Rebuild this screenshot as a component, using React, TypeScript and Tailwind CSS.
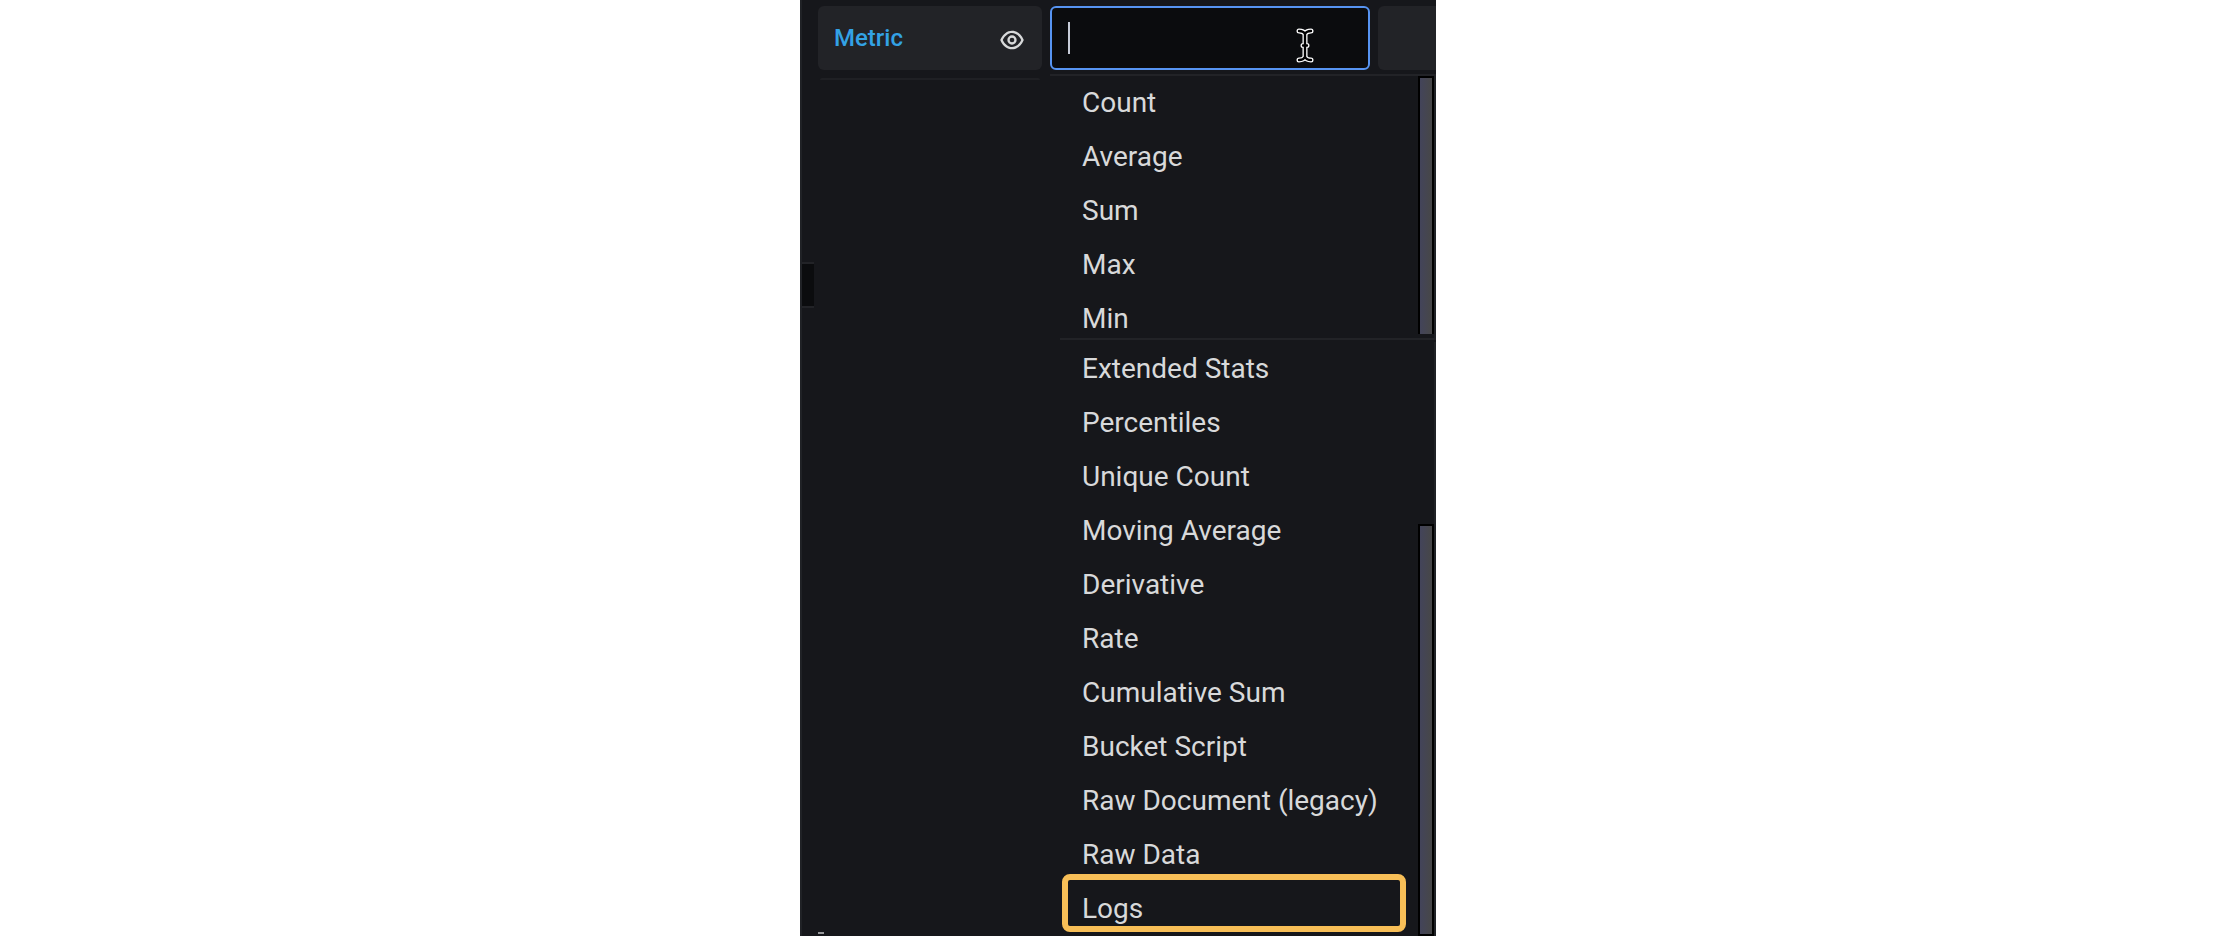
const primaryMetrics = ["Count", "Average", "Sum", "Max", "Min"];
const moreMetrics = [
  "Extended Stats",
  "Percentiles",
  "Unique Count",
  "Moving Average",
  "Derivative",
  "Rate",
  "Cumulative Sum",
  "Bucket Script",
  "Raw Document (legacy)",
  "Raw Data",
  "Logs",
];

function EyeIcon() {
  return (
    <svg viewBox="0 0 24 24" className="size-7" fill="currentColor" aria-hidden="true">
      <path d="M21.92,11.6C19.9,6.91,16.1,4,12,4S4.1,6.91,2.08,11.6a1,1,0,0,0,0,.8C4.1,17.09,7.9,20,12,20s7.9-2.91,9.92-7.6A1,1,0,0,0,21.92,11.6ZM12,18c-3.17,0-6.17-2.29-7.9-6C5.83,8.29,8.83,6,12,6s6.17,2.29,7.9,6C18.17,15.71,15.17,18,12,18ZM12,8a4,4,0,1,0,4,4A4,4,0,0,0,12,8Zm0,6a2,2,0,1,1,2-2A2,2,0,0,1,12,14Z" />
    </svg>
  );
}

function TextCursor() {
  const beam =
    "M3 4 C6 4 8 5 9 7 C10 5 12 4 15 4 M3 33 C6 33 8 32 9 30 C10 32 12 33 15 33 M9 7 V30 M7 18.5 H11";
  return (
    <svg
      viewBox="0 0 18 37"
      className="pointer-events-none absolute top-[27px] left-[246px] h-[37px] w-[18px]"
      fill="none"
      strokeLinecap="round"
      aria-hidden="true"
    >
      <path d={beam} stroke="#ffffff" strokeWidth="5" />
      <path d={beam} stroke="#000000" strokeWidth="2.4" />
    </svg>
  );
}

function Options({ items }: { items: string[] }) {
  return (
    <ul className="min-w-0 flex-1">
      {items.map((name) => (
        <li key={name} className="relative">
          <button type="button" className="block h-[54px] w-full pl-8 text-left text-[28px] leading-[54px] whitespace-nowrap">
            {name}
          </button>
          {name === "Logs" && (
            <span className="pointer-events-none absolute -top-2 right-3 left-3 h-[58px] rounded-lg border-6 border-[#f8bf57]" />
          )}
        </li>
      ))}
    </ul>
  );
}

export default function App() {
  return (
    <div className="bg-white pr-0.5 font-[Roboto,sans-serif]">
      <main className="relative mx-auto w-full max-w-[636px] overflow-hidden border-l-2 border-[#202226] bg-[#16171b] text-[#d8d9da]">
        <div className="flex h-[74px] gap-2 pt-1.5 pb-1 pl-4">
          <div className="flex h-16 w-56 items-center justify-between rounded-md bg-[#222327] px-4">
            <label htmlFor="metric" className="text-2xl font-medium text-[#33a2e5]">
              Metric
            </label>
            <button type="button" aria-label="Toggle visibility" className="pt-1">
              <EyeIcon />
            </button>
          </div>
          <div className="w-80">
            <input
              id="metric"
              type="text"
              className="h-16 w-full rounded-md border-2 border-[#5794f2] bg-[#0b0c0e] px-4 text-[28px] outline-none"
            />
          </div>
          <div className="h-16 flex-1 rounded-l-md bg-[#222327]" />
        </div>

        <div className="flex">
          <div className="flex w-[248px] flex-col">
            <div className="mt-1 mr-2.5 ml-[18px] h-0.5 rounded-t-md bg-[#1f2024]" />
            <div className="mt-[182px] -ml-0.5 h-[46px] w-3.5 border-y-2 border-[#222327] bg-[#0b0c0e]" />
            <div className="mt-auto mb-0.5 ml-4 h-0.5 w-1.5 bg-[#96979a]" />
          </div>

          <div className="min-w-0 flex-1">
            <section className="flex h-[264px] border-t-2 border-[#222327]">
              <Options items={primaryMetrics} />
              <div className="flex w-4 flex-col pb-1">
                <div className="flex-1 border-2 border-b-0 border-black bg-linear-to-r from-[#43445a] to-[#474747]" />
              </div>
              <div className="w-0.5 bg-[#202226]" />
            </section>
            <section className="relative flex pt-1">
              <div className="absolute top-0 right-0 left-2.5 h-0.5 bg-[#222327]" />
              <Options items={moreMetrics} />
              <div className="flex w-4 flex-col pt-[182px]">
                <div className="flex-1 border-2 border-black bg-linear-to-r from-[#43445a] to-[#474747]" />
              </div>
              <div className="w-0.5 bg-[#202226]" />
            </section>
          </div>
        </div>

        <span className="absolute top-[22px] left-[266px] h-8 w-0.5 bg-[#c7ccd8]" />
        <div className="absolute top-0 left-[248px]">
          <TextCursor />
        </div>
      </main>
    </div>
  );
}
